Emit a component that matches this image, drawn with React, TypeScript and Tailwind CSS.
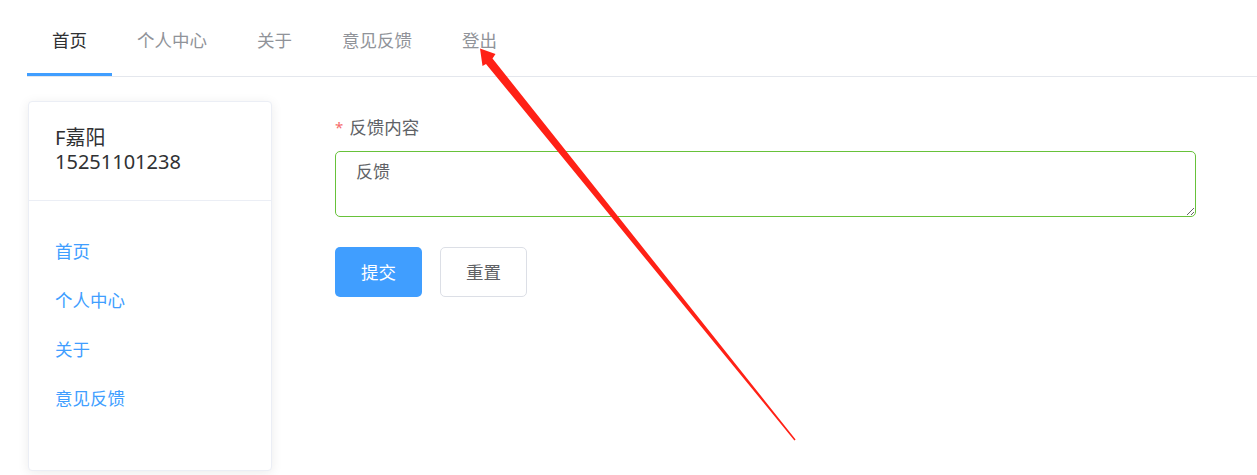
import { useState } from "react";

const tabs = ["首页", "个人中心", "关于", "意见反馈", "登出"];
const menu = ["首页", "个人中心", "关于", "意见反馈"];

function Arrow() {
  // red annotation arrow pointing at the logout tab
  return (
    <svg
      className="pointer-events-none absolute left-0 top-0"
      width={1257}
      height={475}
      viewBox="0 0 1257 475"
    >
      <polygon
        fill="#ff2116"
        points="480,48.5 495.5,54 492.5,58.5 795.6,439.6 794.4,440.4 486,64 482.5,66"
      />
    </svg>
  );
}

function App() {
  const [active] = useState(0);
  const [text, setText] = useState("反馈");

  return (
    <div
      className="relative h-[475px] w-full overflow-hidden bg-white text-[#303133]"
      style={{ fontFamily: '"Noto Sans", "Noto Sans CJK SC", sans-serif' }}
    >
      <div className="pl-[27px]">
        <div className="flex h-[77px] border-b border-[#e4e7ed]">
          {tabs.map((t, i) => (
            <div
              key={t}
              className={`relative px-[25px] pt-[28px] text-[17.5px] leading-[24px] ${
                i === active ? "text-[#303133]" : "text-[#909399]"
              }`}
            >
              {t}
              {i === active && (
                <div className="absolute bottom-0 left-0 h-[3px] w-full bg-[#409eff]" />
              )}
            </div>
          ))}
        </div>
      </div>

      <div className="mt-[24px] flex pl-[28px]">
        <div className="h-[370px] w-[244px] rounded-[4px] border border-[#ebeef5] bg-white shadow-[0_2px_12px_0_rgba(0,0,0,0.08)]">
          <div className="border-b border-[#ebeef5] pb-[26px] pl-[26px] pt-[24px] text-[20px] leading-[24px] text-[#303133]">
            <div>F嘉阳</div>
            <div>15251101238</div>
          </div>
          <div className="pl-[26px] pt-[26px]">
            {menu.map((m) => (
              <div
                key={m}
                className="flex h-[49px] items-center text-[17.5px] text-[#409eff]"
              >
                {m}
              </div>
            ))}
          </div>
        </div>

        <div className="ml-[63px] w-[861px] pt-[14px]">
          <div className="flex items-center text-[17.5px] leading-[24px] text-[#606266]">
            <span className="mr-[6px] text-[15px] text-[#f56c6c]">*</span>
            反馈内容
          </div>
          <textarea
            value={text}
            onChange={(e) => setText(e.target.value)}
            className="mt-[12px] block h-[66px] w-full rounded-[5px] border border-[#67c23a] px-[20px] pt-[8px] text-[17px] leading-[24px] text-[#606266] outline-none"
          />
          <div className="mt-[30px] flex gap-[18px]">
            <button className="h-[50px] w-[87px] rounded-[5px] bg-[#409eff] text-[17.5px] text-white">
              提交
            </button>
            <button className="h-[50px] w-[87px] rounded-[5px] border border-[#dcdfe6] bg-white text-[17.5px] text-[#606266]">
              重置
            </button>
          </div>
        </div>
      </div>

      <Arrow />
    </div>
  );
}

export default App;
